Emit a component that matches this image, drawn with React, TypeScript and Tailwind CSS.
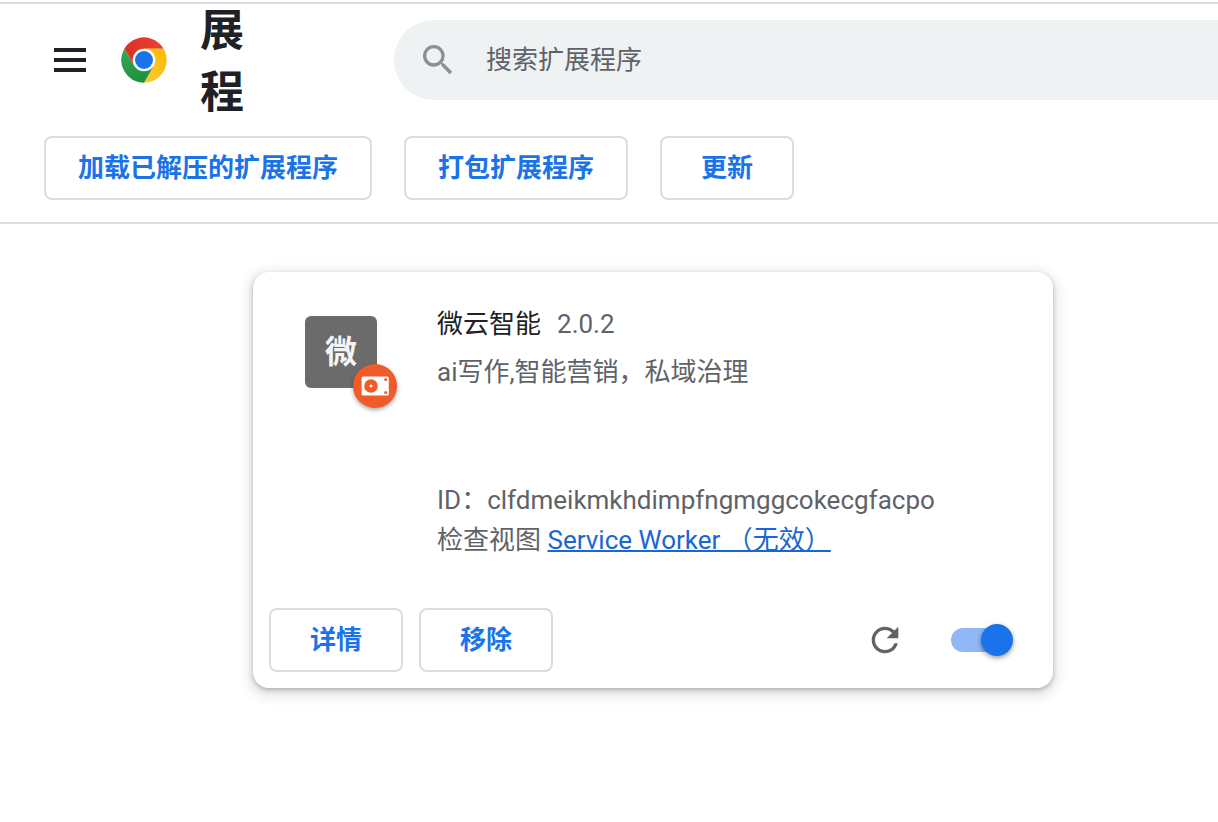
import type { ReactNode } from "react";

interface Extension {
  name: string;
  version: string;
  description: string;
  id: string;
  initial: string;
}

const extension: Extension = {
  name: "微云智能",
  version: "2.0.2",
  description: "ai写作,智能营销，私域治理",
  id: "clfdmeikmkhdimpfngmggcokecgfacpo",
  initial: "微",
};

function MenuIcon() {
  return (
    <svg viewBox="0 0 32 24" className="h-6 w-8" fill="#202124" aria-hidden="true">
      <path d="M0 0h32v4H0zM0 10h32v4H0zM0 20h32v4H0z" />
    </svg>
  );
}

function ChromeLogo() {
  return (
    <svg viewBox="0 0 48 48" className="size-12 shrink-0" aria-hidden="true">
      <defs>
        <linearGradient id="red" x1="0" y1="0" x2="1" y2="0">
          <stop offset="0" stopColor="#d93025" />
          <stop offset="1" stopColor="#ea4335" />
        </linearGradient>
        <linearGradient id="yellow" x1="0" y1="1" x2="0.6" y2="0">
          <stop offset="0" stopColor="#fcc934" />
          <stop offset="1" stopColor="#fbbc04" />
        </linearGradient>
        <linearGradient id="green" x1="0.6" y1="1" x2="0.1" y2="0">
          <stop offset="0" stopColor="#1e8e3e" />
          <stop offset="1" stopColor="#34a853" />
        </linearGradient>
      </defs>
      <path d="M24 24V12.7h19.6A22.7 22.7 0 0 0 4.34 12.65L14.2 29.65z" fill="url(#red)" />
      <path d="M24 12.7h19.6A22.7 22.7 0 0 1 24 46.7l9.8-17.05L24 24z" fill="url(#yellow)" />
      <path d="M33.8 29.65L24 46.7A22.7 22.7 0 0 1 4.34 12.65L14.2 29.65 24 24z" fill="url(#green)" />
      <circle cx="24" cy="24" r="11.3" fill="#fff" />
      <circle cx="24" cy="24" r="9" fill="#1a73e8" />
    </svg>
  );
}

function SearchIcon() {
  return (
    <svg viewBox="0 0 24 24" className="size-10 shrink-0" fill="#8b8f91" aria-hidden="true">
      <path d="M15.5 14h-.79l-.28-.27A6.471 6.471 0 0 0 16 9.5 6.5 6.5 0 1 0 9.5 16c1.61 0 3.09-.59 4.23-1.57l.27.28v.79l5 4.99L20.49 19l-4.99-5zm-6 0C7.01 14 5 11.99 5 9.5S7.01 5 9.5 5 14 7.01 14 9.5 11.99 14 9.5 14z" />
    </svg>
  );
}

function ReloadIcon() {
  return (
    <svg viewBox="0 0 24 24" className="size-10" fill="#5f6368" aria-hidden="true">
      <path d="M17.65 6.35A7.958 7.958 0 0 0 12 4c-4.42 0-7.99 3.58-7.99 8s3.57 8 7.99 8c3.73 0 6.84-2.55 7.73-6h-2.08A5.99 5.99 0 0 1 12 18c-3.31 0-6-2.69-6-6s2.69-6 6-6c1.66 0 3.14.69 4.22 1.78L13 11h7V4l-2.35 2.35z" />
    </svg>
  );
}

function UnpackedIcon() {
  return (
    <svg viewBox="0 0 44 44" className="size-11" aria-hidden="true">
      <rect x="8.6" y="12.6" width="27.2" height="19" rx="1.6" fill="#fff" />
      <circle cx="18" cy="22" r="6.8" fill="#f15a29" />
      <circle cx="18" cy="22" r="1.5" fill="#fff" />
      <circle cx="32.7" cy="15.5" r="1.5" fill="#f15a29" />
      <circle cx="32.7" cy="28.6" r="1.5" fill="#f15a29" />
    </svg>
  );
}

function OutlineButton({ children }: { children: ReactNode }) {
  return (
    <button
      type="button"
      className="h-16 min-w-[134px] px-8 border-2 border-[#dadce0] rounded-lg font-bold text-[#1a73e8] whitespace-nowrap cursor-pointer hover:bg-blue-50"
    >
      {children}
    </button>
  );
}

function ExtensionCard({ item }: { item: Extension }) {
  return (
    <article className="w-full max-w-[800px] rounded-2xl bg-white p-4 shadow-[0_2px_4px_rgba(60,64,67,0.3),0_4px_12px_4px_rgba(60,64,67,0.15)]">
      <div className="flex pl-9 pt-4 gap-[60px]">
        <div className="relative mt-3 size-[72px] shrink-0 rounded-md bg-[#6b6b6b] flex items-center justify-center text-[32px] font-bold text-gray-100">
          {item.initial}
          <span className="absolute left-12 top-12 rounded-full bg-[#f15a29] shadow-[0_2px_4px_rgba(0,0,0,0.35)]">
            <UnpackedIcon />
          </span>
        </div>
        <div className="min-w-0 leading-10 text-[#5f6368]">
          <div className="flex gap-4">
            <h2 className="text-[#202124]">{item.name}</h2>
            <span>{item.version}</span>
          </div>
          <p className="mt-2 min-h-32">{item.description}</p>
          <p className="break-all">ID：{item.id}</p>
          <p>
            检查视图{" "}
            <a href="#service-worker" className="text-[#1967d2] underline decoration-2">
              Service Worker （无效）
            </a>
          </p>
        </div>
      </div>
      <div className="mt-12 flex items-center gap-4">
        <OutlineButton>详情</OutlineButton>
        <OutlineButton>移除</OutlineButton>
        <button type="button" aria-label="重新加载" className="ml-auto cursor-pointer">
          <ReloadIcon />
        </button>
        <input
          type="checkbox"
          role="switch"
          defaultChecked
          aria-label="启用"
          className="ml-[30px] mr-[30px] flex h-6 w-14 shrink-0 appearance-none items-center justify-start rounded-full bg-gray-300 cursor-pointer before:-mx-1.5 before:size-8 before:shrink-0 before:rounded-full before:bg-white before:shadow-[0_2px_5px_rgba(0,0,0,0.4)] checked:justify-end checked:bg-[#8fb8f5] checked:before:bg-[#1a73e8]"
        />
      </div>
    </article>
  );
}

export default function App() {
  return (
    <div
      lang="zh-CN"
      className="min-h-screen bg-white pt-0.5 font-['Roboto','Noto_Sans_CJK_SC',sans-serif] text-[26px]"
    >
      <header className="border-y-2 border-[#dadce0]">
        <div className="flex h-28 items-center pl-[54px]">
          <button type="button" aria-label="主菜单" className="mr-[34px] shrink-0 cursor-pointer">
            <MenuIcon />
          </button>
          <ChromeLogo />
          <h1 className="ml-8 w-11 shrink-0 break-all pt-1 text-[44px] font-bold leading-[62px] text-[#202124]">
            展程
          </h1>
          <label className="ml-[150px] flex h-20 min-w-0 flex-1 items-center gap-7 rounded-l-full bg-[#eef2f3] pl-6">
            <SearchIcon />
            <input
              type="search"
              aria-label="搜索扩展程序"
              placeholder="搜索扩展程序"
              className="min-w-0 flex-1 bg-transparent outline-none placeholder:text-[#5f6368]"
            />
          </label>
        </div>
        <div className="flex flex-wrap gap-8 px-11 pt-5 pb-[22px]">
          <OutlineButton>加载已解压的扩展程序</OutlineButton>
          <OutlineButton>打包扩展程序</OutlineButton>
          <OutlineButton>更新</OutlineButton>
        </div>
      </header>
      <main className="pl-[253px] pr-6 py-12">
        <ExtensionCard item={extension} />
      </main>
    </div>
  );
}
